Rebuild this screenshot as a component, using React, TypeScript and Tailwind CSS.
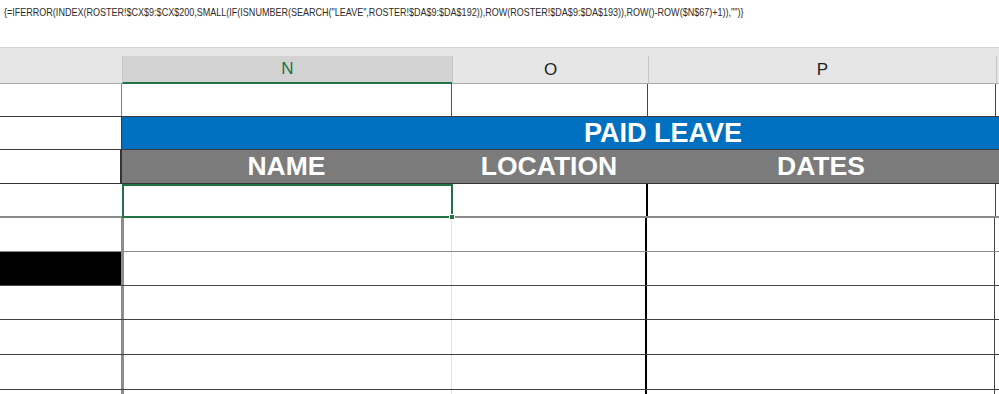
import React from 'react';

const formula =
  '{=IFERROR(INDEX(ROSTER!$CX$9:$CX$200,SMALL(IF(ISNUMBER(SEARCH("LEAVE",ROSTER!$DA$9:$DA$192)),ROW(ROSTER!$DA$9:$DA$193)),ROW()-ROW($N$67)+1)),"")}';

const bodyRows = [
  { h: 'h-[34px]', line: 'border-[#8a8a8a]', black: false },
  { h: 'h-[34px]', line: 'border-[#4a4a4a]', black: true },
  { h: 'h-[34px]', line: 'border-[#404040]', black: false },
  { h: 'h-[35px]', line: 'border-[#404040]', black: false },
  { h: 'h-[35px]', line: 'border-[#404040]', black: false },
  { h: 'h-[35px]', line: 'border-[#404040]', black: false },
];

const App = () => {
  return (
    <div className="w-[999px] h-[394px] overflow-hidden bg-white font-['Liberation_Sans',Arial,sans-serif]">
      {/* formula bar */}
      <div className="h-[48px] border-b border-[#d4d4d4] bg-white pl-[4px] pt-[5px]">
        <p className="w-max origin-left scale-x-[0.82] text-[11px] leading-[14px] text-[#2b2b2b] whitespace-nowrap font-['Liberation_Sans_Narrow','Liberation_Sans',sans-serif]">
          {formula}
        </p>
      </div>

      {/* column headers */}
      <div className="h-[36px] bg-[#e6e6e6] pt-[8px] flex">
        <div className="w-[122px] h-[28px] border-b border-[#ababab]" />
        <div className="w-[330px] h-[28px] bg-[#d2d2d2] border-l border-[#c6c6c6] border-b-2 border-b-[#217346] flex items-center justify-center text-[17px] text-[#217346]">
          N
        </div>
        <div className="w-[196px] h-[28px] border-l border-[#c6c6c6] border-b border-b-[#ababab] flex items-center justify-center text-[17px] text-[#222]">
          O
        </div>
        <div className="w-[348px] h-[28px] border-l border-[#c6c6c6] border-b border-b-[#ababab] flex items-center justify-center text-[17px] text-[#222]">
          P
        </div>
        <div className="flex-1 h-[28px] border-l border-[#c6c6c6] border-b border-b-[#ababab]" />
      </div>

      {/* row 1 */}
      <div className="h-[33px] flex border-b border-[#3a3a3a]">
        <div className="w-[122px] border-r border-[#7f7f7f]" />
        <div className="w-[330px] border-r border-[#555]" />
        <div className="w-[196px] border-r border-[#444]" />
        <div className="w-[348px] border-r border-[#444]" />
        <div className="flex-1" />
      </div>

      {/* title row */}
      <div className="h-[33px] flex border-b border-[#3a3a3a]">
        <div className="w-[122px] border-r border-[#3a3a3a]" />
        <div className="flex-1 bg-[#0070c0] pl-[462px] flex items-center">
          <span className="text-[27px] font-bold text-white leading-none">PAID LEAVE</span>
        </div>
      </div>

      {/* header row */}
      <div className="h-[34px] flex border-b border-[#333]">
        <div className="w-[122px] border-r-2 border-[#333]" />
        <div className="w-[329px] bg-[#7b7b7b] flex items-center justify-center text-[26.5px] font-bold text-white leading-none">
          NAME
        </div>
        <div className="w-[196px] bg-[#7b7b7b] flex items-center justify-center text-[26.5px] font-bold text-white leading-none">
          LOCATION
        </div>
        <div className="w-[348px] bg-[#7b7b7b] flex items-center justify-center text-[26.5px] font-bold text-white leading-none">
          DATES
        </div>
        <div className="flex-1 bg-[#7b7b7b]" />
      </div>

      {/* selected row */}
      <div className="h-[34px] flex border-b-2 border-[#8a8a8a]">
        <div className="w-[122px]" />
        <div className="relative w-[331px] border-2 border-[#217346] -mb-[2px]">
          <div className="absolute -right-[4px] -bottom-[4px] w-[6px] h-[6px] bg-[#217346] border border-white" />
        </div>
        <div className="w-[195px] border-r-2 border-black" />
        <div className="w-[348px] border-r border-[#444]" />
        <div className="flex-1" />
      </div>

      {bodyRows.map((r, i) => (
        <div key={i} className={`${r.h} flex border-b ${r.line}`}>
          <div className={`w-[121px] ${r.black ? 'bg-black' : ''}`} />
          <div className="w-[3px] bg-[#8c8c8c]" />
          <div className="w-[328px] border-r border-[#e2e2e2]" />
          <div className="w-[195px] border-r-2 border-black" />
          <div className="w-[348px] border-r border-[#444]" />
          <div className="flex-1" />
        </div>
      ))}
    </div>
  );
};

export default App;
